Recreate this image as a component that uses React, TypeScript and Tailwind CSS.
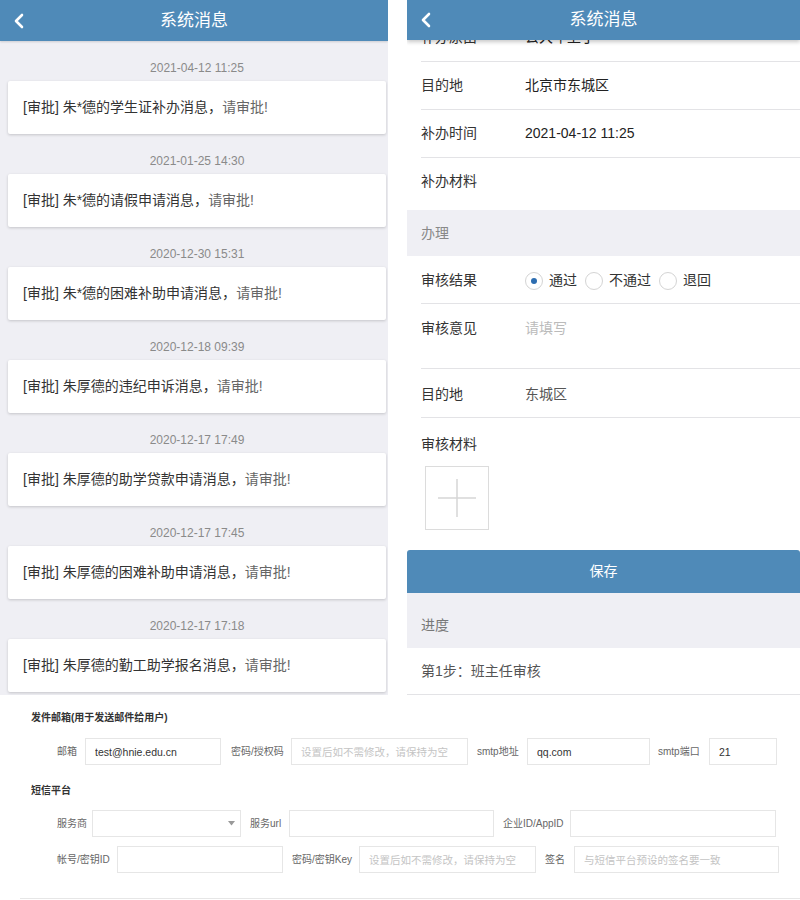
import React from "react";

const items = [
  { date: "2021-04-12 11:25", text: "[审批] 朱*德的学生证补办消息，" },
  { date: "2021-01-25 14:30", text: "[审批] 朱*德的请假申请消息，" },
  { date: "2020-12-30 15:31", text: "[审批] 朱*德的困难补助申请消息，" },
  { date: "2020-12-18 09:39", text: "[审批] 朱厚德的违纪申诉消息，" },
  { date: "2020-12-17 17:49", text: "[审批] 朱厚德的助学贷款申请消息，" },
  { date: "2020-12-17 17:45", text: "[审批] 朱厚德的困难补助申请消息，" },
  { date: "2020-12-17 17:18", text: "[审批] 朱厚德的勤工助学报名消息，" },
];

function Chevron() {
  return (
    <svg width="12" height="16" viewBox="0 0 12 16" fill="none">
      <path d="M9 2 L3 8 L9 14" stroke="white" strokeWidth="2.6" strokeLinecap="round" strokeLinejoin="round" />
    </svg>
  );
}

function Header({ h }: { h: string }) {
  return (
    <div className={`${h} bg-[#4f8ab8] flex items-center relative shrink-0`}>
      <div className="absolute left-[13px] top-0 bottom-0 flex items-center">
        <Chevron />
      </div>
      <div className="flex-1 text-center text-white text-[17px]">系统消息</div>
    </div>
  );
}

function Row({ label, value, valueClass = "text-[#222]" }: { label: string; value: string; valueClass?: string }) {
  return (
    <div className="ml-[14px] h-[48px] border-b border-[#e3e3e6] flex items-center text-[14px]">
      <span className="w-[104px] text-[#333] shrink-0">{label}</span>
      <span className={valueClass}>{value}</span>
    </div>
  );
}

function Radio({ checked, label }: { checked?: boolean; label: string }) {
  return (
    <div className="flex items-center mr-[8px]">
      <span className="w-[18px] h-[18px] rounded-full border border-[#d4d4d4] flex items-center justify-center shrink-0">
        {checked && <span className="w-[6px] h-[6px] rounded-full bg-[#2d6db0]" />}
      </span>
      <span className="ml-[6px] text-[#333]">{label}</span>
    </div>
  );
}

function Label({ w, ml = "", children }: { w: string; ml?: string; children: React.ReactNode }) {
  return <span className={`${w} ${ml} shrink-0 whitespace-nowrap text-[10px] text-[#666]`}>{children}</span>;
}

function Field({ w, ml, value, placeholder }: { w: string; ml: string; value?: string; placeholder?: string }) {
  return (
    <input
      readOnly
      value={value ?? ""}
      placeholder={placeholder}
      className={`${w} ${ml} shrink-0 h-[27px] border border-[#e6e6e6] pl-[9px] text-[10.5px] text-[#333] placeholder:text-[#c4c4c4] outline-none bg-white`}
    />
  );
}

export default function App() {
  return (
    <div className="w-[800px] h-[900px] bg-white overflow-hidden font-['Liberation_Sans','Noto_Sans_CJK_SC',sans-serif]">
      <div className="flex h-[695px]">
        {/* Left panel */}
        <div className="w-[388px] h-[695px] bg-[#efeff4] overflow-hidden flex flex-col shrink-0">
          <div className="shadow-[0_1px_2px_rgba(0,0,0,0.15)] relative z-10">
            <Header h="h-[41px]" />
          </div>
          <div className="pl-[8px] pr-[2px]">
            {items.map((it) => (
              <div key={it.date}>
                <div className="h-[40px] flex items-end justify-center pb-[5px] leading-[16px] text-[12px] text-[#8a8a8a]">
                  {it.date}
                </div>
                <div className="h-[53px] bg-white rounded-[2px] shadow-[0_1px_3px_rgba(0,0,0,0.18)] flex items-center pl-[15px] text-[14px]">
                  <span className="text-[#333]">{it.text}</span>
                  <span className="text-[#666]">请审批!</span>
                </div>
              </div>
            ))}
          </div>
        </div>

        <div className="w-[19px] shrink-0" />

        {/* Right panel */}
        <div className="relative flex-1 h-[695px] overflow-hidden bg-white">
          <div className="absolute top-0 left-0 right-0 z-10 shadow-[0_2px_4px_rgba(0,0,0,0.22)]">
            <Header h="h-[40px]" />
          </div>
          <div className="pt-[14px]">
            <Row label="补办原由" value="公大年上丁" />
            <Row label="目的地" value="北京市东城区" />
            <Row label="补办时间" value="2021-04-12 11:25" />
            <div className="ml-[14px] h-[52px] pt-[13px] leading-[20px] text-[14px] text-[#333]">补办材料</div>
            <div className="h-[46px] bg-[#efeff4] flex items-center pl-[14px] text-[14px] text-[#888]">办理</div>
            <div className="ml-[14px] h-[48px] border-b border-[#e3e3e6] flex items-center pt-[2px] text-[14px]">
              <span className="w-[104px] text-[#333] shrink-0">审核结果</span>
              <Radio checked label="通过" />
              <Radio label="不通过" />
              <Radio label="退回" />
            </div>
            <div className="ml-[14px] h-[65px] border-b border-[#e3e3e6] flex items-start pt-[14px] leading-[20px] text-[14px]">
              <span className="w-[104px] text-[#333] shrink-0">审核意见</span>
              <span className="text-[#bbb]">请填写</span>
            </div>
            <div className="ml-[14px] h-[49px] border-b border-[#e3e3e6] flex items-center pt-[2px] text-[14px]">
              <span className="w-[104px] text-[#333] shrink-0">目的地</span>
              <span className="text-[#555]">东城区</span>
            </div>
            <div className="pl-[14px] pt-[16px]">
              <div className="leading-[20px] text-[14px] text-[#333]">审核材料</div>
              <div className="ml-[4px] mt-[12px] w-[64px] h-[64px] border border-[#dcdcdc] flex items-center justify-center">
                <svg width="38" height="38" viewBox="0 0 38 38">
                  <line x1="0" y1="19" x2="38" y2="19" stroke="#d6d6d6" strokeWidth="1.5" />
                  <line x1="19" y1="0" x2="19" y2="38" stroke="#d6d6d6" strokeWidth="1.5" />
                </svg>
              </div>
            </div>
            <div className="mt-[20px] h-[43px] bg-[#4f8ab8] rounded-t-[3px] flex items-center justify-center text-white text-[14px]">保存</div>
            <div className="h-[55px] bg-[#efeff4] pl-[14px] pt-[22px] leading-[20px] text-[14px] text-[#777]">进度</div>
            <div className="h-[47px] border-b border-[#e3e3e6] flex items-center pl-[14px] text-[14px] text-[#555]">第1步：班主任审核</div>
          </div>
        </div>
      </div>

      {/* Bottom desktop form */}
      <div className="pt-[15px]">
        <div className="pl-[31px] leading-[16px] text-[10px] font-bold text-[#333]">发件邮箱(用于发送邮件给用户)</div>
        <div className="mt-[12px] pl-[57px] flex items-center">
          <Label w="w-[18px]">邮箱</Label>
          <Field w="w-[136px]" ml="ml-[10px]" value="test@hnie.edu.cn" />
          <Label w="w-[51px]" ml="ml-[10px]">密码/授权码</Label>
          <Field w="w-[177px]" ml="ml-[9px]" placeholder="设置后如不需修改，请保持为空" />
          <Label w="w-[41px]" ml="ml-[9px]">smtp地址</Label>
          <Field w="w-[123px]" ml="ml-[9px]" value="qq.com" />
          <Label w="w-[42px]" ml="ml-[8px]">smtp端口</Label>
          <Field w="w-[68px]" ml="ml-[9px]" value="21" />
        </div>
        <div className="mt-[18px] pl-[31px] leading-[16px] text-[10px] font-bold text-[#333]">短信平台</div>
        <div className="mt-[11px] pl-[57px] flex items-center">
          <Label w="w-[29px]">服务商</Label>
          <div className="ml-[6px] w-[149px] h-[27px] border border-[#e6e6e6] shrink-0 flex items-center justify-end pr-[5px]">
            <svg width="7" height="5" viewBox="0 0 7 5">
              <path d="M0 0 L7 0 L3.5 4.5 Z" fill="#999" />
            </svg>
          </div>
          <Label w="w-[32px]" ml="ml-[9px]">服务url</Label>
          <Field w="w-[205px]" ml="ml-[7px]" />
          <Label w="w-[58px]" ml="ml-[9px]">企业ID/AppID</Label>
          <Field w="w-[206px]" ml="ml-[9px]" />
        </div>
        <div className="mt-[9px] pl-[57px] flex items-center">
          <Label w="w-[50px]">帐号/密钥ID</Label>
          <Field w="w-[166px]" ml="ml-[10px]" />
          <Label w="w-[58px]" ml="ml-[9px]">密码/密钥Key</Label>
          <Field w="w-[177px]" ml="ml-[9px]" placeholder="设置后如不需修改，请保持为空" />
          <Label w="w-[19px]" ml="ml-[9px]">签名</Label>
          <Field w="w-[205px]" ml="ml-[10px]" placeholder="与短信平台预设的签名要一致" />
        </div>
        <div className="mt-[25px] ml-[20px] border-t border-[#e6e6e6]" />
      </div>
    </div>
  );
}
